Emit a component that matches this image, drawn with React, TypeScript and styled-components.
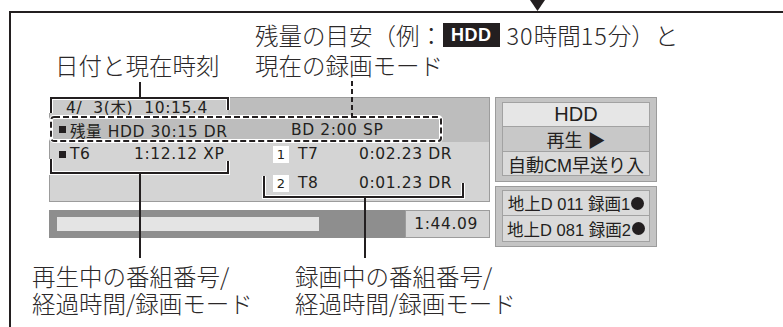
import styled, { createGlobalStyle } from "styled-components";

const INK = "#231f20";

const GlobalStyle = createGlobalStyle`
  html, body {
    margin: 0;
    padding: 0;
    background: #fff;
  }
`;

const Page = styled.div`
  position: relative;
  width: 783px;
  height: 327px;
  overflow: hidden;
  background: #fff;
  color: ${INK};
  font-family: "Noto Sans CJK JP", sans-serif;
`;

const TopRule = styled.div`
  height: 11px;
`;

const Frame = styled.div`
  margin-left: 9px;
  height: 316px;
  box-sizing: border-box;
  border-top: 2px solid ${INK};
  border-left: 2px solid ${INK};
  padding-top: 7px;
`;

const Callouts = styled.div<{ $pad: number; $col: number; $lh: number }>`
  display: grid;
  grid-template-columns: ${(p) => p.$col}px auto;
  padding-left: ${(p) => p.$pad}px;
  font-size: 23.5px;
  font-weight: 300;
  color: #2b2829;
  line-height: ${(p) => p.$lh}px;
  white-space: nowrap;
`;

const Callout = styled.div<{ $col?: number }>`
  grid-column: ${(p) => p.$col ?? "auto"};
`;

const InlineBadge = styled.span`
  display: inline-block;
  vertical-align: top;
  margin: 3px 7px 0 0;
  padding: 0 8px;
  background: ${INK};
  color: #fff;
  font-family: "Liberation Sans", Arial, sans-serif;
  font-weight: 700;
  font-size: 18px;
  letter-spacing: 0.5px;
  line-height: 24px;
`;

const Wide = styled.span`
  letter-spacing: 1px;
`;

const Main = styled.div`
  display: flex;
  gap: 5px;
  margin-top: 17px;
  padding-left: 38px;
  height: 150px;
`;

const LeftCol = styled.div`
  width: 441px;
  display: flex;
  flex-direction: column;
  gap: 8px;
`;

const Screen = styled.div`
  height: 105px;
  box-sizing: border-box;
  border: 1px solid #9c9c9c;
  display: flex;
  flex-direction: column;
  font-family: "DejaVu Sans", "Noto Sans CJK JP", sans-serif;
  font-size: 15.5px;
  letter-spacing: 0.6px;
  white-space: nowrap;
`;

const TopStrip = styled.div`
  height: 44px;
  background: #bdbdbd;
  display: flex;
  flex-direction: column;
`;

const DateTab = styled.div`
  width: 178px;
  height: 19px;
  box-sizing: border-box;
  padding-left: 16px;
  background: #cbcbcb;
  line-height: 21px;
`;

const RemainRow = styled.div`
  height: 25px;
  display: grid;
  grid-template-columns: 232px auto;
  align-items: center;
  padding-left: 9px;
`;

const Lower = styled.div`
  flex: 1;
  background: #d4d4d4;
  display: grid;
  grid-template-columns: 75px 139px 25px 61px auto;
  grid-template-rows: 24px 24px;
  row-gap: 5px;
  align-items: center;
  padding-left: 9px;
`;

const Cell = styled.div<{ $col?: number }>`
  grid-column: ${(p) => p.$col ?? "auto"};
  display: flex;
  align-items: center;
`;

const Square = styled.span`
  display: inline-block;
  width: 7px;
  height: 7px;
  background: ${INK};
  margin-right: 4px;
`;

const Num = styled.span`
  display: inline-block;
  width: 16px;
  height: 17px;
  background: #fff;
  text-align: center;
  font-size: 13px;
  line-height: 17px;
  letter-spacing: 0;
`;

const Progress = styled.div`
  height: 28px;
  display: flex;
  font-family: "DejaVu Sans", sans-serif;
`;

const Track = styled.div`
  flex: 1;
  background: #8e8e8e;
  padding: 7px 8px;
`;

const Fill = styled.div`
  height: 14px;
  background: #e4e4e4;
`;

const TimeBox = styled.div`
  width: 85px;
  box-sizing: border-box;
  border: 1px solid #9c9c9c;
  background: #d4d4d4;
  text-align: right;
  padding-right: 11px;
  font-size: 15.5px;
  letter-spacing: 0.6px;
  line-height: 26px;
`;

const RightCol = styled.div`
  width: 162px;
  display: flex;
  flex-direction: column;
  gap: 4px;
`;

const InfoBox = styled.div<{ $h: number; $pad: string }>`
  height: ${(p) => p.$h}px;
  box-sizing: border-box;
  border: 1px solid #9c9c9c;
  background: #c4c4c4;
  padding: ${(p) => p.$pad};
  display: flex;
  flex-direction: column;
`;

const InfoRow = styled.div<{ $bg: string; $h: number; $size: number }>`
  height: ${(p) => p.$h}px;
  box-sizing: border-box;
  border: 1px solid #a2a2a2;
  margin-top: -1px;
  background: ${(p) => p.$bg};
  display: flex;
  align-items: center;
  justify-content: center;
  font-family: "Liberation Sans", "Noto Sans CJK JP", sans-serif;
  font-size: ${(p) => p.$size}px;
  white-space: nowrap;
  &:first-child {
    margin-top: 0;
  }
`;

const RecDot = styled.span`
  display: inline-block;
  width: 13px;
  height: 13px;
  border-radius: 50%;
  background: ${INK};
  margin-left: 1px;
`;

const Leaders = styled.svg`
  position: absolute;
  left: 0;
  top: 0;
  pointer-events: none;
`;

const BottomCallouts = styled.div`
  margin-top: 16px;
`;

const brackets = [
  "M51 113 V98 H228 V110",
  "M51 159 V173 H228 V161",
  "M264 176 V197 H463 V183",
];
const stems = [
  [140, 82, 98],
  [140, 173, 258],
  [365, 197, 258],
];

const tuners = [
  { ch: "011", slot: 1 },
  { ch: "081", slot: 2 },
];

const elapsed = 262 / 340;

export default function App() {
  return (
    <>
      <GlobalStyle />
      <Page>
        <TopRule />
        <Frame>
          <Callouts $pad={44} $col={200} $lh={30}>
            <Callout $col={2}>
              残量の目安（例：<InlineBadge>HDD</InlineBadge>
              <Wide>30</Wide>時間<Wide>15</Wide>分）と
            </Callout>
            <Callout>日付と現在時刻</Callout>
            <Callout>現在の録画モード</Callout>
          </Callouts>

          <Main>
            <LeftCol>
              <Screen>
                <TopStrip>
                  <DateTab>4/&nbsp;&nbsp;3(木)&nbsp;&nbsp;10:15.4</DateTab>
                  <RemainRow>
                    <Cell>
                      <Square />
                      残量 HDD 30:15 DR
                    </Cell>
                    <Cell>BD 2:00 SP</Cell>
                  </RemainRow>
                </TopStrip>
                <Lower>
                  <Cell>
                    <Square />
                    T6
                  </Cell>
                  <Cell>1:12.12 XP</Cell>
                  <Cell>
                    <Num>1</Num>
                  </Cell>
                  <Cell>T7</Cell>
                  <Cell>0:02.23 DR</Cell>
                  <Cell $col={3}>
                    <Num>2</Num>
                  </Cell>
                  <Cell>T8</Cell>
                  <Cell>0:01.23 DR</Cell>
                </Lower>
              </Screen>
              <Progress>
                <Track>
                  <Fill style={{ width: `${elapsed * 100}%` }} />
                </Track>
                <TimeBox>1:44.09</TimeBox>
              </Progress>
            </LeftCol>

            <RightCol>
              <InfoBox $h={85} $pad="4px 6px">
                <InfoRow $bg="#e6e6e6" $h={25} $size={20}>
                  HDD
                </InfoRow>
                <InfoRow $bg="#c8c8c8" $h={26} $size={18}>
                  再生 ▶
                </InfoRow>
                <InfoRow $bg="#dadada" $h={25} $size={18}>
                  自動CM早送り入
                </InfoRow>
              </InfoBox>
              <InfoBox $h={61} $pad="3px 6px 4px">
                {tuners.map((t) => (
                  <InfoRow key={t.ch} $bg="#dadada" $h={t.slot === 1 ? 26 : 27} $size={16.5}>
                    地上D {t.ch} 録画{t.slot}
                    <RecDot />
                  </InfoRow>
                ))}
              </InfoBox>
            </RightCol>
          </Main>

          <BottomCallouts>
            <Callouts $pad={21} $col={263} $lh={27}>
              <Callout>再生中の番組番号/</Callout>
              <Callout>録画中の番組番号/</Callout>
              <Callout>経過時間/録画モード</Callout>
              <Callout>経過時間/録画モード</Callout>
            </Callouts>
          </BottomCallouts>
        </Frame>

        <Leaders width={783} height={327} viewBox="0 0 783 327">
          <polygon points="530,0 545,0 537.5,11" fill={INK} />
          {brackets.map((d) => (
            <g key={d} fill="none">
              <path d={d} stroke="#fff" strokeWidth={4} />
              <path d={d} stroke={INK} strokeWidth={2} />
            </g>
          ))}
          {stems.map(([x, y1, y2]) => (
            <line key={`${x}-${y1}`} x1={x} y1={y1} x2={x} y2={y2} stroke={INK} strokeWidth={2} />
          ))}
          <rect x={51} y={117} width={390} height={24} rx={3} fill="none" stroke="#fff" strokeWidth={4} />
          <rect
            x={51}
            y={117}
            width={390}
            height={24}
            rx={3}
            fill="none"
            stroke={INK}
            strokeWidth={2}
            strokeDasharray="6 3"
          />
          <line x1={352} y1={81} x2={352} y2={116} stroke={INK} strokeWidth={2} strokeDasharray="5 3" />
        </Leaders>
      </Page>
    </>
  );
}
